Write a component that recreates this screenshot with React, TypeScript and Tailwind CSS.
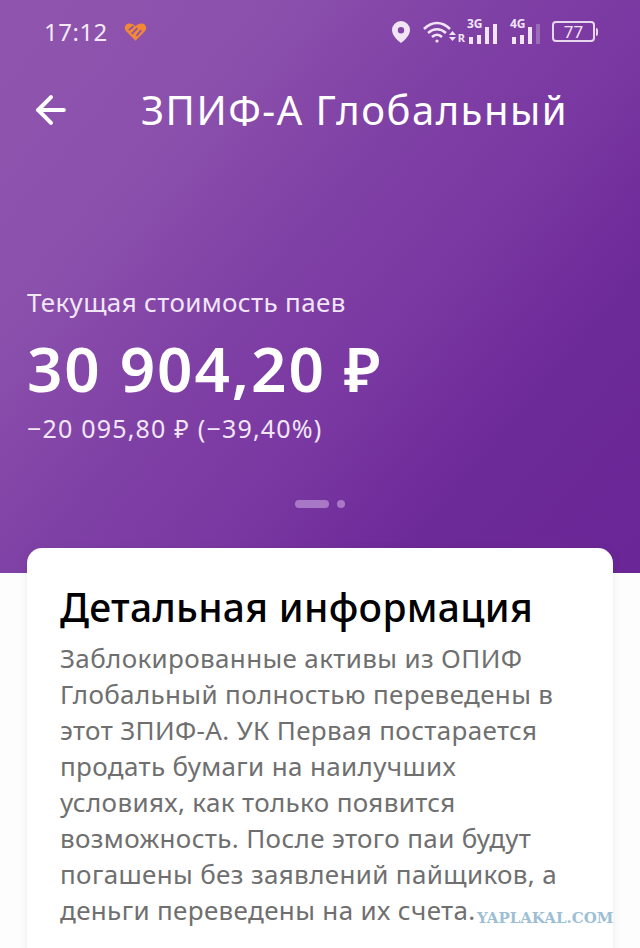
import { ArrowLeft } from "lucide-react";

function SignalBars({ label, dim }: { label: string; dim?: boolean }) {
  return (
    <div className="relative flex h-[24px] w-[29px] items-end gap-[4px]">
      <span className="absolute left-[-2px] top-[-3px] text-[12px] leading-[13px] font-bold text-[#f0e4f5]">{label}</span>
      <span className="h-[7px] w-[4px] bg-[#f0e4f5]" />
      <span className="h-[9px] w-[4px] bg-[#f0e4f5]" />
      <span className="h-[17px] w-[4px] bg-[#f0e4f5]" />
      <span className={dim ? "h-[20px] w-[4px] bg-[#9a6cb8]" : "h-[20px] w-[4px] bg-[#f0e4f5]"} />
    </div>
  );
}

function StatusBar() {
  return (
    <div className="flex h-[62px] items-center pl-[44px] pr-[42px] pt-[1px]">
      <span className="text-[24px] tracking-[0.5px] text-[#f3e9f7]">17:12</span>
      <svg className="ml-[16px]" width="23" height="20" viewBox="0 0 24 20" aria-hidden="true">
        <path d="M12 19 2 9C-1 5 2 1 6 1c2 0 4 1 6 3 2-2 4-3 6-3 4 0 7 4 4 8z" fill="#f28a35" />
        <path d="M5 8l5-4M8 12l6-6M13 14l5-6" stroke="#8c52ac" strokeWidth="1.800" fill="none" />
      </svg>
      <div className="ml-auto flex items-center">
        <svg width="20" height="24" viewBox="0 0 20 24" aria-hidden="true">
          <path fillRule="evenodd" d="M10 1a9 9 0 0 1 9 9c0 5-5 10-9 13C6 20 1 15 1 10a9 9 0 0 1 9-9zm0 6a3.200 3.200 0 1 0 0 6.400a3.200 3.200 0 0 0 0-6.400z" fill="#f0e4f5" />
        </svg>
        <svg className="ml-[12px]" width="34" height="22" viewBox="0 0 34 22" fill="none" stroke="#f0e4f5" strokeWidth="2.600" aria-hidden="true">
          <path d="M1 8c8-8 18-8 26 0M5 12c6-5 12-5 18 0M9 16c3-3 7-3 10 0" />
          <circle cx="14" cy="20" r="1.600" fill="#f0e4f5" stroke="none" />
          <path d="M26 14h7l-3.500-4zM26 16h7l-3.500 4z" fill="#f0e4f5" stroke="none" />
        </svg>
        <span className="mb-[-14px] ml-[1px] text-[11px] font-bold text-[#f0e4f5]">R</span>
        <div className="ml-[4px]"><SignalBars label="3G" /></div>
        <div className="ml-[14px]"><SignalBars label="4G" dim /></div>
        <div className="ml-[11px] flex h-[21px] w-[43px] items-center justify-center rounded-[4px] border-2 border-[#e6d6ee] text-[17px] leading-none text-[#f0e4f5]">77</div>
        <span className="ml-[1px] h-[8px] w-[2px] rounded-r-sm bg-[#e6d6ee]" />
      </div>
    </div>
  );
}

export default function App() {
  return (
    <div className="h-[948px] overflow-hidden bg-[#fdfdfd] font-['Noto_Sans',sans-serif]">
      <div className="h-[573px] bg-[linear-gradient(130deg,#8f55ae_0%,#8b50ac_25%,#7f40a5_45%,#7a38a2_60%,#6c2998_78%,#6a2696_100%)] text-white">
        <StatusBar />
        <div className="flex h-[96px] items-center pl-[29px]">
          <ArrowLeft className="h-[44px] w-[44px]" strokeWidth={2.200} />
          <h1 className="ml-[68px] text-[40px] leading-none font-normal tracking-[1.500px]">ЗПИФ-А Глобальный</h1>
        </div>
        <p className="mt-[127px] pl-[27px] text-[26px] leading-[34px] tracking-[0.350px] text-[#f1e6f6]">Текущая стоимость паев</p>
        <p className="mt-[15px] pl-[27px] text-[62px] leading-[68px] font-semibold tracking-[1.900px]">30 904,20 ₽</p>
        <p className="mt-[9px] pl-[27px] text-[25px] leading-[34px] tracking-[1.200px] text-[#f1e6f6]">−20 095,80 ₽ (−39,40%)</p>
        <div className="mt-[55px] flex items-center justify-center gap-[8px]">
          <span className="h-[8px] w-[34px] rounded-full bg-[#a877c5]" />
          <span className="h-[8px] w-[8px] rounded-full bg-[#a877c5]" />
        </div>
      </div>
      <div className="mx-[27px] mt-[-25px] h-[500px] rounded-[15px] bg-white pl-[33px] pr-[30px] pt-[35px] shadow-[0_1px_8px_rgba(0,0,0,0.08)]">
        <h2 className="text-[39px] leading-[48px] font-medium tracking-[0.300px] text-black">Детальная информация</h2>
        <p className="mt-[9px] text-[26px] leading-[36px] tracking-[0.350px] text-[#6f6f6f]">
          Заблокированные активы из ОПИФ Глобальный полностью переведены в этот ЗПИФ-А. УК Первая постарается продать бумаги на наилучших условиях, как только появится возможность. После этого паи будут погашены без заявлений пайщиков, а деньги переведены на их счета.
        </p>
      </div>
      <span className="absolute left-[477px] top-[908px] font-['DejaVu_Serif',serif] text-[15px] leading-[20px] font-bold text-[#9dbfd6]">YAPLAKAL.COM</span>
    </div>
  );
}
